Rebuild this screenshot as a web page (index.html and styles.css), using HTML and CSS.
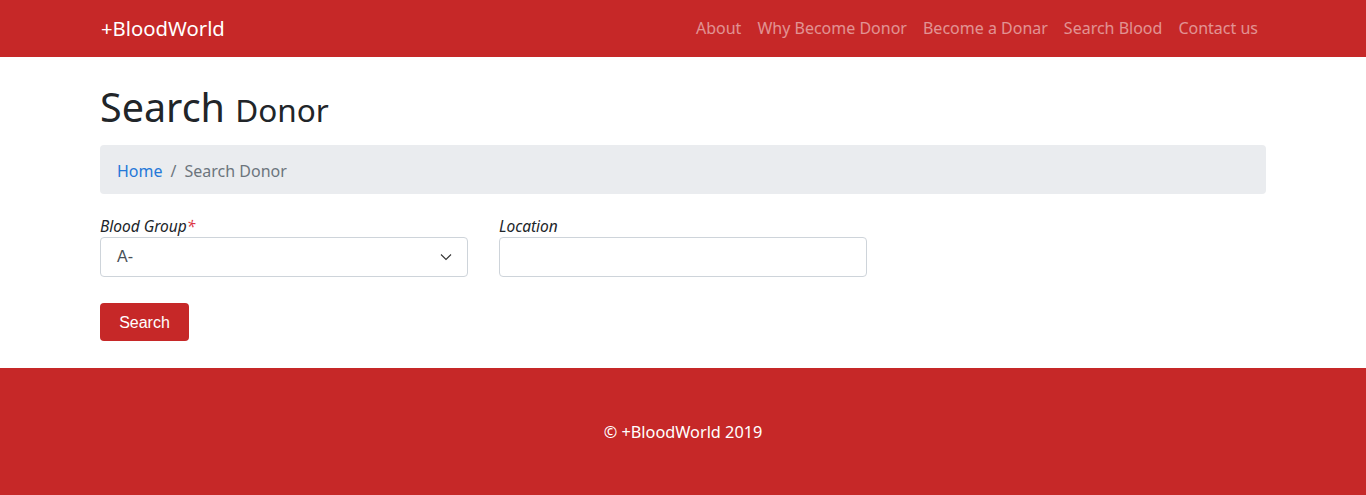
FILE: index.html
```html
<!DOCTYPE html>
<html lang="en">
<head>
<meta charset="utf-8">
<title>Search Donor - BloodWorld</title>
<link rel="stylesheet" href="styles.css">
</head>
<body>
<nav class="navbar">
  <div class="container nav-inner">
    <a class="brand" href="#">+BloodWorld</a>
    <ul class="nav-links">
      <li><a href="#">About</a></li>
      <li><a href="#">Why Become Donor</a></li>
      <li><a href="#">Become a Donar</a></li>
      <li><a href="#">Search Blood</a></li>
      <li><a href="#">Contact us</a></li>
    </ul>
  </div>
</nav>
<main class="container main">
  <h1 class="title">Search <small>Donor</small></h1>
  <ol class="breadcrumb">
    <li><a href="#">Home</a></li>
    <li class="sep">/</li>
    <li class="active">Search Donor</li>
  </ol>
  <form class="search-form">
    <div class="form-row">
      <div class="field">
        <label>Blood Group<span class="req">*</span></label>
        <div class="select">
          <span class="select-value">A-</span>
          <svg class="chev" width="12" height="8" viewBox="0 0 12 8"><path d="M1 1.5 L6 6.5 L11 1.5" fill="none" stroke="#333" stroke-width="1.1"/></svg>
        </div>
      </div>
      <div class="field">
        <label>Location</label>
        <div class="input"></div>
      </div>
    </div>
    <button type="button" class="btn">Search</button>
  </form>
</main>
<footer class="footer">
  <p>© +BloodWorld 2019</p>
</footer>
</body>
</html>
```
FILE: styles.css
```css
* { box-sizing: border-box; }
body {
  margin: 0;
  font-family: "Noto Sans", "Open Sans", sans-serif;
  font-size: 16px;
  color: #212529;
  background: #fff;
}
a { text-decoration: none; }
.container {
  width: 1166px;
  margin: 0 auto;
}
.navbar {
  background: #c62828;
  height: 57px;
}
.nav-inner {
  height: 57px;
  display: flex;
  align-items: center;
  justify-content: space-between;
  padding-bottom: 2px;
}
.brand {
  color: #fff;
  font-size: 20.3px;
  padding-left: 1px;
}
.nav-links {
  list-style: none;
  display: flex;
  margin: 0;
  padding: 0;
}
.nav-links a {
  display: block;
  padding: 0 8px;
  color: rgba(255,255,255,0.5);
  font-size: 16px;
}
.main {
  padding-top: 26px;
  padding-bottom: 27px;
}
.title {
  margin: 0 0 11px;
  font-weight: 400;
  font-size: 39.5px;
  line-height: 48px;
  color: #212529;
}
.title small {
  font-size: 31.5px;
}
.breadcrumb {
  list-style: none;
  display: flex;
  margin: 0 0 22px;
  padding: 14px 17px 10px;
  height: 49px;
  background: #eaecef;
  border-radius: 4px;
  font-size: 16px;
  line-height: 25px;
}
.breadcrumb a { color: #2478d8; }
.breadcrumb .sep { color: #6c757d; padding: 0 8px; }
.breadcrumb .active { color: #6c757d; }
.form-row {
  display: grid;
  grid-template-columns: 368px 368px;
  column-gap: 31px;
}
.field label {
  display: block;
  font-style: italic;
  font-size: 15.5px;
  line-height: 20px;
  margin-bottom: 1px;
}
.req { color: #dc3545; }
.select, .input {
  height: 40px;
  border: 1px solid #ced4da;
  border-radius: 4px;
  background: #fff;
}
.select {
  display: flex;
  align-items: center;
  justify-content: space-between;
  padding: 0 15px 0 16px;
  font-family: "Liberation Sans", Arial, sans-serif;
  font-size: 16px;
  color: #495057;
}
.search-form .btn {
  margin-top: 26px;
  width: 89px;
  height: 38px;
  border: none;
  border-radius: 4px;
  background: #c62828;
  color: #fff;
  font-family: "Liberation Sans", Arial, sans-serif;
  font-size: 16px;
  padding: 2px 0 0;
}
.footer {
  background: #c62828;
  height: 127px;
  display: flex;
  align-items: center;
  justify-content: center;
  color: #fff;
}
.footer p {
  margin: 0;
  font-size: 16.3px;
}
```
